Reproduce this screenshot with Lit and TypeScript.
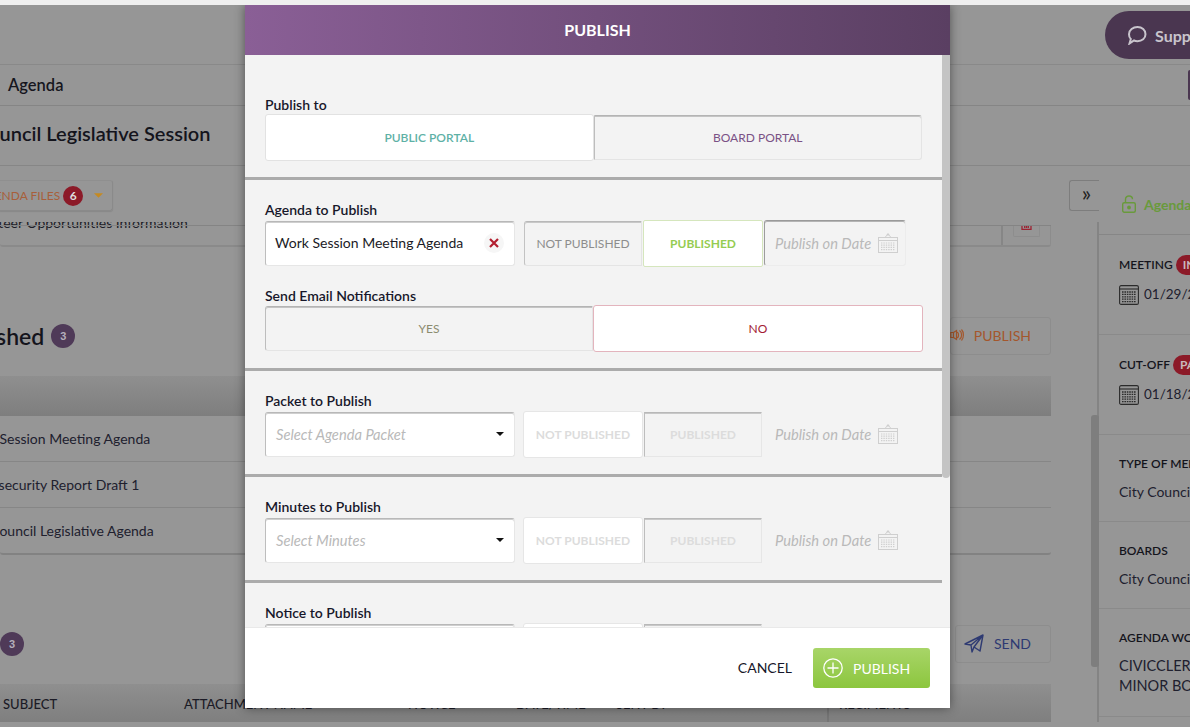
import { LitElement, html, css } from "lit";
import { customElement } from "lit/decorators.js";

const calIcon = (cls: string) => html`<svg class=${cls} viewBox="0 0 20 20" fill="none" stroke="currentColor" stroke-width="1">
  <path d="M6.5 5 L10 1 L13.5 5" />
  <circle cx="10" cy="1.5" r="0.8" />
  <rect x="0.5" y="4.5" width="19" height="15" />
  <path d="M0.5 7.5 H19.5" />
  <g stroke-dasharray="1.4 1" stroke-width="1.2">
    <path d="M3 10 H17 M3 12.2 H17 M3 14.4 H17 M3 16.6 H17" />
  </g>
</svg>`;

const sideCal = html`<svg class="scal" viewBox="0 0 20 20" fill="none" stroke="#2b2b2b" stroke-width="1.1">
  <rect x="0.6" y="0.6" width="18.8" height="18.8" rx="1.5" />
  <path d="M0.6 4 H19.4" />
  <g stroke-dasharray="1.6 0.8" stroke-width="1.3">
    <path d="M3 7 H17 M3 9.4 H17 M3 11.8 H17 M3 14.2 H17 M3 16.6 H17" />
  </g>
</svg>`;

const caret = html`<svg class="caret" viewBox="0 0 8 4"><path d="M0 0 H8 L4 4 Z" fill="currentColor" /></svg>`;

interface Row {
  label: string;
  placeholder: string;
}

const rows: Row[] = [
  { label: "Packet to Publish", placeholder: "Select Agenda Packet" },
  { label: "Minutes to Publish", placeholder: "Select Minutes" },
];

@customElement("app-root")
export class AppRoot extends LitElement {
  static styles = css`
    :host {
      display: block;
      width: 1190px;
      height: 727px;
      overflow: hidden;
      font-family: Lato, "Noto Sans", sans-serif;
      color: #1b1b26;
      background: #f0f0f0;
    }
    * { box-sizing: border-box; }
    .strip { height: 5px; background: #efefef; }
    .stage { position: relative; height: 722px; background: #969696; overflow: hidden; }

    /* page beneath the dialog */
    .top { height: 60px; border-bottom: 1px solid #898989; display: flex; justify-content: flex-end; padding: 6px 0 0; }
    .pill { width: 85px; height: 48px; background: #4a3650; border-radius: 24px 0 0 24px; display: flex; align-items: center; gap: 8px; padding-left: 22px; color: #c8c4cc; font-weight: 700; font-size: 16px; white-space: nowrap; overflow: hidden; flex: none; }
    .pill svg { width: 20px; height: 20px; flex: none; }
    .nav { height: 41px; border-bottom: 1px solid #858585; display: flex; align-items: center; justify-content: space-between; font-size: 16.5px; font-weight: 600; padding: 0 0 1px 8px; color: #16161e; }
    .nav i { width: 2px; height: 30px; background: #4a3650; border-radius: 3px 0 0 3px; }
    .title { height: 60px; border-bottom: 1px solid #868686; display: flex; align-items: center; font-size: 20px; font-weight: 600; overflow: hidden; white-space: nowrap; padding-bottom: 6px; color: #14141c; }
    .title span { margin-left: -25px; }
    .content { display: flex; height: 556px; }
    .main { width: 1099px; flex: none; position: relative; display: flex; flex-direction: column; }
    .tools { height: 56px; flex: none; padding-top: 14px; display: flex; justify-content: space-between; }
    .files { width: 113px; height: 31px; border: 1px solid #8a8a8a; border-left: 0; border-top-color: #8f8f8f; border-radius: 0 3px 3px 0; display: flex; align-items: center; font-size: 12px; color: #a85f3a; box-shadow: 0 1px 1px #888; white-space: nowrap; overflow: hidden; }
    .files b { font-weight: 400; margin-left: -22px; }
    .count { width: 20px; height: 20px; border-radius: 50%; background: #8c1a28; color: #ddd; font-size: 12px; font-weight: 700; display: flex; align-items: center; justify-content: center; margin: 0 0 0 3px; flex: none; }
    .files .caret { width: 9px; height: 5px; color: #c58a22; margin-left: 11px; flex: none; }
    .chev { width: 30px; height: 31px; border: 1px solid #7d7d7d; border-right: 0; border-radius: 3px 0 0 3px; display: flex; align-items: center; justify-content: center; font-size: 22px; line-height: 1; padding: 0 0 5px 4px; color: #222; }
    .scroll { flex: 1; overflow: hidden; border-right: 2px solid #848484; padding-right: 46px; }
    .clip { height: 25px; border-bottom: 2px solid #8a8a8a; border-radius: 0 0 3px 3px; display: flex; font-size: 14px; position: relative; overflow: hidden; }
    .clip::before { content: ""; position: absolute; left: 0; right: 0; top: 3px; height: 1px; background: #848484; }
    .clip .t { flex: 1; white-space: nowrap; overflow: hidden; line-height: 14px; margin-top: -6px; color: #1d1d28; }
    .clip .t span { margin-left: -37px; display: inline-block; }
    .clip .d { width: 50px; margin-top: 3px; border-left: 2px solid #868686; border-right: 1px solid #8c8c8c; padding: 0 10px; flex: none; }
    .clip .d div { width: 27px; height: 12px; border: 1px solid #8d8d8d; border-top: 0; border-radius: 0 0 2px 2px; display: flex; justify-content: center; }
    .clip .d svg { width: 11px; height: 5px; }
    .head { height: 129px; padding: 70px 0 21px; display: flex; align-items: center; justify-content: space-between; }
    .h { display: flex; align-items: center; font-size: 23px; font-weight: 600; white-space: nowrap; color: #14141c; }
    .h span { margin-left: -55px; }
    .b3 { width: 24px; height: 24px; border-radius: 50%; background: #4f3a58; color: #b4aebb; font: 700 11px "Liberation Sans", sans-serif; display: flex; align-items: center; justify-content: center; margin-left: 7px; flex: none; }
    .b3.first { margin-left: 0; }
    .act { height: 38px; border: 1px solid #8d8d8d; border-radius: 3px; display: flex; align-items: center; justify-content: flex-end; gap: 10px; font-size: 14px; padding: 0 19px 2px 0; flex: none; }
    .act.pub { width: 101px; color: #a4572c; }
    .act.send { width: 96px; color: #2e3a72; }
    .act svg { flex: none; }
    .thead { height: 40px; background: linear-gradient(#8f8f8f, #7e7e7e); display: flex; align-items: center; font-size: 13px; white-space: nowrap; overflow: hidden; position: relative; }
    .tr { height: 46px; flex: none; border-bottom: 1px solid #868686; display: flex; align-items: center; font-size: 14px; white-space: nowrap; overflow: hidden; color: #20202e; }
    .tr span { margin-left: -38px; }
    .tr.end { height: 47px; border-bottom: 2px solid #828282; border-radius: 0 0 3px 3px; }
    .thead span { flex: none; font-weight: 500; }
    .c1 { margin-left: 3px; width: 181px; }
    .c2 { width: 224px; }
    .c3 { width: 108px; }
    .c4 { width: 100px; }
    .c5 { width: 211px; }
    .c6 { border-left: 2px solid #757575; padding-left: 10px; height: 40px; line-height: 40px; }
    .bar { position: absolute; right: 0; top: 249px; width: 8px; height: 252px; border-radius: 3px; background: #7e7e7e; }

    .side { flex: 1; min-width: 0; overflow: hidden; white-space: nowrap; }
    .lock { height: 69px; border-bottom: 1px solid #868686; display: flex; align-items: center; gap: 8px; padding: 8px 0 0 23px; color: #699a3c; font-size: 14px; font-weight: 700; }
    .lock svg { width: 14px; height: 18px; flex: none; }
    .blk { border-bottom: 1px solid #8a8a8a; padding: 21px 0 0 20px; font-size: 14px; color: #20202e; }
    .blk.a { height: 100px; }
    .blk.b { height: 87px; padding-top: 20px; }
    .blk.c { height: 108px; padding-top: 20px; }
    .lab { height: 18px; line-height: 18px; font-size: 12px; font-weight: 600; color: #14141c; display: flex; align-items: center; gap: 3px; }
    .red { background: #8c1a28; color: #c9b7bb; font-size: 12px; font-weight: 700; height: 20px; line-height: 20px; border-radius: 10px; padding: 0 9px 0 7px; flex: none; }
    .dt { display: flex; align-items: center; gap: 5px; margin-top: 11px; font-size: 13.5px; line-height: 18px; color: #20202e; }
    .dt span { margin-bottom: 2px; }
    .scal { width: 20px; height: 20px; flex: none; }
    .val { margin-top: 9px; line-height: 20px; font-size: 14px; }
    .c .val { font-size: 14.5px; }

    /* dialog */
    .modal { position: absolute; left: 245px; top: 0; width: 705px; height: 703px; background: #f3f3f3; box-shadow: 0 0 10px rgba(0, 0, 0, .45); display: flex; flex-direction: column; }
    .mh { height: 50px; flex: none; background: linear-gradient(90deg, #8a5f96, #5a3f62); color: #fff; font-weight: 700; font-size: 16px; display: flex; align-items: center; justify-content: center; padding-bottom: 2px; }
    .mb { flex: 1; min-height: 0; overflow: hidden; position: relative; }
    .sb { position: absolute; right: 0; top: 0; width: 8px; height: 423px; background: #c4c4c4; border-radius: 0 0 4px 4px; }
    .sec { width: 697px; padding: 21px 20px 16px; border-bottom: 3px solid #ababab; }
    .sec.one { padding-top: 41px; }
    .sec.end { border-bottom: 0; }
    .lb { height: 18px; line-height: 18px; margin-bottom: 1px; font-size: 14px; font-weight: 600; color: #17172a; }
    .one .lb { margin-bottom: 0; }
    .lb.gap { margin: 20px 0 0; }
    .ctl { height: 47px; display: flex; align-items: center; font-size: 12px; }
    .tog { flex: 1; display: flex; align-items: center; justify-content: center; height: 45px; background: #f3f3f3; border: 1px solid #e4e4e4; border-top-color: #b4b4b4; border-left-color: #bdbdbd; box-shadow: inset 0 1px 0 #c4c4c4; }
    .tog.l { border-radius: 3px 0 0 3px; }
    .tog.r { border-radius: 0 3px 3px 0; }
    .tog.on { height: 47px; background: #fff; border: 1px solid #e2e2e2; box-shadow: none; border-radius: 3px; }
    .teal { color: #5eb1a6; font-weight: 600; }
    .plum { color: #7a5185; }
    .yes { color: #8b8b6f; }
    .no { color: #a31c33; }
    .tog.no-on { border-color: #e3b4bd; flex: none; width: 330px; margin-right: -1px; }
    .input { width: 250px; height: 45px; background: #fff; border: 1px solid #e6e6e6; border-top-color: #b8b8b8; border-left-color: #bdbdbd; box-shadow: inset 0 1px 0 #cfcfcf; border-radius: 3px; display: flex; align-items: center; justify-content: space-between; padding: 0 9px 1px; font-size: 14px; flex: none; }
    .input > span:first-child { margin-bottom: 1px; }
    .ph { font-style: italic; color: #b9b9b9; padding-left: 1px; font-size: 14.7px; }
    .input .caret { width: 8px; height: 4px; color: #111; margin-right: 1px; }
    .x { width: 20px; height: 20px; margin-right: 1px; border-radius: 50%; background: #f6f6f6; display: flex; align-items: center; justify-content: center; }
    .x svg { width: 10px; height: 10px; }
    .st { height: 45px; display: flex; align-items: center; justify-content: center; flex: none; }
    .st.np { margin-left: 9px; width: 118px; background: #f3f3f3; border: 1px solid #e4e4e4; border-top-color: #b8b8b8; border-left-color: #c2c2c2; box-shadow: inset 0 1px 0 #c8c8c8; border-radius: 3px 0 0 3px; color: #8d8d8d; }
    .st.pb { margin-left: 1px; width: 120px; height: 47px; background: #fff; border: 1px solid #d5e6bd; color: #95cc52; font-weight: 700; border-radius: 2px; }
    .st.np2 { margin-left: 8px; width: 120px; height: 47px; background: #fff; border: 1px solid #e6e6e6; border-radius: 3px; color: #dcdcdc; font-weight: 700; }
    .st.pb2 { margin-left: 1px; width: 118px; background: #f3f3f3; border: 1px solid #e6e6e6; border-top-color: #b8b8b8; border-left-color: #bdbdbd; box-shadow: inset 0 1px 0 #c8c8c8; color: #dcdcdc; font-weight: 700; }
    .date { display: flex; align-items: center; font-size: 14.7px; font-style: italic; color: #b9b9b9; flex: none; }
    .date.box { width: 142px; height: 46px; margin: 0 0 1px 1px; padding-left: 10px; border: 1px solid #ececec; border-top-color: #9a9a9a; border-left-color: #9c9c9c; box-shadow: inset 0 1px 0 #b4b4b4; border-radius: 3px; }
    .date.plain { padding: 0 0 2px 13px; }
    .cal { width: 20px; height: 20px; margin-left: 7px; color: #cfcfcf; flex: none; }
    .mf { height: 81px; flex: none; background: #fff; border-top: 1px solid #e9e9e9; display: flex; align-items: center; justify-content: flex-end; padding: 0 20px 0 0; font-size: 14px; }
    .cancel { margin: 0 21px 1px 0; color: #17172a; }
    .go { width: 117px; height: 40px; border-radius: 3px; background: linear-gradient(#a8d568, #8cc63e); color: #fff; display: flex; align-items: center; padding-left: 10px; gap: 10px; }
    .go svg { width: 20px; height: 20px; flex: none; }
  `;

  private renderRow(r: Row) {
    return html`<div class="sec">
      <div class="lb">${r.label}</div>
      <div class="ctl">
        <div class="input"><span class="ph">${r.placeholder}</span>${caret}</div>
        <div class="st np2">NOT PUBLISHED</div>
        <div class="st pb2">PUBLISHED</div>
        <div class="date plain">Publish on Date${calIcon("cal")}</div>
      </div>
    </div>`;
  }

  render() {
    return html`
      <div class="strip"></div>
      <div class="stage">
        <div class="top">
          <div class="pill">
            <svg viewBox="0 0 20 20" fill="none" stroke="currentColor" stroke-width="2"><path d="M10.5 2 C15 2 18.5 5 18.5 9.2 C18.5 13.4 15 16.2 10.5 16.2 C9.3 16.2 8 16 7 15.5 L2.5 18.5 L3.8 14 C2.4 12.8 2 11.1 2 9.2 C2 5 6 2 10.5 2 Z" /></svg>
            Support
          </div>
        </div>
        <div class="nav"><span>Agenda</span><i></i></div>
        <div class="title"><span>Council Legislative Session</span></div>
        <div class="content">
          <div class="main">
            <div class="tools">
              <div class="files"><b>AGENDA FILES</b><span class="count">6</span>${caret}</div>
              <div class="chev">»</div>
            </div>
            <div class="scroll">
              <div class="clip">
                <div class="t"><span>Volunteer Opportunities Information</span></div>
                <div class="d"><div><svg viewBox="0 0 11 5" fill="none" stroke="#9c2232" stroke-width="1.3"><path d="M1 0 V4.4 H10 V0 M3.7 0 V3 M5.5 0 V3 M7.3 0 V3" /></svg></div></div>
              </div>
              <div class="head">
                <div class="h"><span>Published</span><div class="b3">3</div></div>
                <div class="act pub">
                  <svg width="14" height="14" viewBox="0 0 14 14" fill="none" stroke="#a4572c" stroke-width="1.2"><path d="M0.8 4.5 H3.5 V9.5 H0.8 Z M3.5 4.5 L6.5 2.5 V11.5 L3.5 9.5 M6.5 4 C7.5 4 8.5 5.2 8.5 7 C8.5 8.8 7.5 10 6.5 10 M9.5 2.5 C11 3.5 11.6 5.2 11.6 7 C11.6 8.8 11 10.5 9.5 11.5 M11.5 1.5 C13 3 13.4 5 13.4 7 C13.4 9 13 11 11.5 12.5" /></svg>
                  PUBLISH
                </div>
              </div>
              <div class="thead"></div>
              <div class="tr"><span>Work Session Meeting Agenda</span></div>
              <div class="tr"><span>Cybersecurity Report Draft 1</span></div>
              <div class="tr end"><span>City Council Legislative Agenda</span></div>
              <div class="head">
                <div class="h"><div class="b3 first">3</div></div>
                <div class="act send">
                  <svg width="20" height="20" viewBox="0 0 20 20" fill="none" stroke="#2e3a72" stroke-width="1.4" stroke-linejoin="round"><path d="M1 11 L19 2 L16 18 L10 14 L8 19 L7 12 Z M7 12 L19 2 M10 14 L19 2" /></svg>
                  SEND
                </div>
              </div>
              <div class="thead">
                <span class="c1">SUBJECT</span><span class="c2">ATTACHMENT NAME</span><span class="c3">NOTICE</span><span class="c4">DATE/TIME</span><span class="c5">SENT BY</span><span class="c6">RECIPIENTS</span>
              </div>
            </div>
            <div class="bar"></div>
          </div>
          <div class="side">
            <div class="lock">
              <svg viewBox="0 0 14 18" fill="none" stroke="#699a3c" stroke-width="1.4"><rect x="0.7" y="7.7" width="12.6" height="9.6" rx="1.5" /><path d="M3.5 7.5 V4.2 C3.5 2.2 5 1 7 1 C9 1 10.5 2.2 10.5 4.2" /><circle cx="7" cy="12.5" r="1.2" fill="#699a3c" /></svg>
              Agenda
            </div>
            <div class="blk a"><div class="lab">MEETING <span class="red">IN</span></div><div class="dt">${sideCal}<span>01/29/2022</span></div></div>
            <div class="blk a"><div class="lab">CUT-OFF <span class="red">PAST</span></div><div class="dt">${sideCal}<span>01/18/2022</span></div></div>
            <div class="blk b"><div class="lab">TYPE OF MEETING</div><div class="val">City Council</div></div>
            <div class="blk b"><div class="lab">BOARDS</div><div class="val">City Council</div></div>
            <div class="blk c"><div class="lab">AGENDA WORKFLOW</div><div class="val">CIVICCLERK<br />MINOR BOARDS</div></div>
          </div>
        </div>

        <div class="modal">
          <div class="mh">PUBLISH</div>
          <div class="mb">
            <div class="sec one">
              <div class="lb">Publish to</div>
              <div class="ctl">
                <div class="tog l on teal">PUBLIC PORTAL</div>
                <div class="tog r plum">BOARD PORTAL</div>
              </div>
            </div>
            <div class="sec two">
              <div class="lb">Agenda to Publish</div>
              <div class="ctl">
                <div class="input"><span>Work Session Meeting Agenda</span><span class="x"><svg viewBox="0 0 10 10" stroke="#b31f30" stroke-width="2.2"><path d="M1 1 L9 9 M9 1 L1 9" /></svg></span></div>
                <div class="st np">NOT PUBLISHED</div>
                <div class="st pb">PUBLISHED</div>
                <div class="date box">Publish on Date${calIcon("cal")}</div>
              </div>
              <div class="lb gap">Send Email Notifications</div>
              <div class="ctl">
                <div class="tog l yes">YES</div>
                <div class="tog r on no no-on">NO</div>
              </div>
            </div>
            ${rows.map((r) => this.renderRow(r))}
            <div class="sec end">
              <div class="lb">Notice to Publish</div>
              <div class="ctl">
                <div class="input"><span class="ph">Select Notice</span>${caret}</div>
                <div class="st np2">NOT PUBLISHED</div>
                <div class="st pb2">PUBLISHED</div>
              </div>
            </div>
            <div class="sb"></div>
          </div>
          <div class="mf">
            <span class="cancel">CANCEL</span>
            <div class="go">
              <svg viewBox="0 0 20 20" fill="none" stroke="#fff" stroke-width="1.3"><circle cx="10" cy="10" r="9.2" /><path d="M10 4.5 V15.5 M4.5 10 H15.5" /></svg>
              PUBLISH
            </div>
          </div>
        </div>
      </div>
    `;
  }
}
